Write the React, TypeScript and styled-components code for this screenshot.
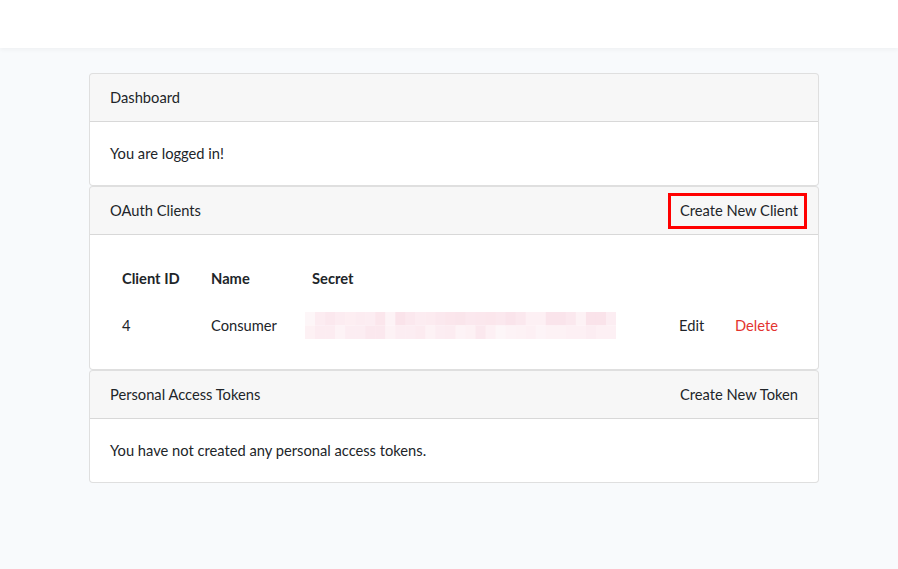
import React from "react";
import styled, { createGlobalStyle } from "styled-components";

const Global = createGlobalStyle`
  html, body { margin: 0; padding: 0; }
  body {
    background: #f8fafc;
    font-family: Lato, "Noto Sans", sans-serif;
    font-size: 14.7px;
    line-height: 23px;
    color: #212529;
  }
  * { box-sizing: border-box; }
`;

const Page = styled.div`
  min-height: 569px;
  display: flex;
  flex-direction: column;
`;

const Navbar = styled.nav`
  height: 48px;
  background: #fff;
  box-shadow: 0 2px 4px rgba(0, 0, 0, 0.04);
`;

const Main = styled.main`
  padding: 25px 0 24px 89px;
`;

const Column = styled.div`
  width: 730px;
  display: flex;
  flex-direction: column;
`;

const Card = styled.section`
  background: #fff;
  border: 1px solid rgba(0, 0, 0, 0.125);
  border-radius: 4px;
  overflow: hidden;
`;

const CardHeader = styled.header`
  height: 48px;
  padding: 0 20px;
  background: rgba(0, 0, 0, 0.03);
  border-bottom: 1px solid rgba(0, 0, 0, 0.125);
  display: flex;
  align-items: center;
  justify-content: space-between;
`;

const CardBody = styled.div`
  padding: 20px;
`;

const HeaderLink = styled.a<{ $marked?: boolean }>`
  position: relative;
  color: #212529;
  text-decoration: none;
  cursor: pointer;
  &::after {
    content: "";
    display: ${(p) => (p.$marked ? "block" : "none")};
    position: absolute;
    left: -12px;
    right: -9px;
    top: -6px;
    bottom: -7px;
    border: 3px solid #ff0000;
  }
`;

const Table = styled.table`
  width: 100%;
  table-layout: fixed;
  border-collapse: collapse;
`;

const Th = styled.th`
  text-align: left;
  font-weight: 700;
  padding: 12px;
  height: 47px;
`;

const Td = styled.td`
  padding: 12px;
  height: 47px;
  vertical-align: middle;
`;

const SecretCell = styled.td`
  padding: 0 0 0 5px;
  vertical-align: middle;
`;

const Action = styled.a<{ $danger?: boolean }>`
  color: ${(p) => (p.$danger ? "#e3342f" : "#212529")};
  text-decoration: none;
  cursor: pointer;
`;

const shades = [
  "#fdf6f8", "#fcecf1", "#fbe8ee", "#fcecf1", "#fdeef2", "#fcecf1", "#fcedf2", "#fbe6ec",
  "#fdf3f6", "#fae3ea", "#fbe8ee", "#fcecf1", "#fcebf0", "#fbe8ee", "#fbe6ec", "#fae5eb",
  "#fbe8ee", "#fbe7ed", "#fbe6ec", "#fbe8ee", "#fae4eb", "#fbe8ee", "#fdf0f4", "#fdf0f4",
  "#fae4eb", "#fae4eb", "#fbe8ee", "#fdf2f5", "#fae3ea", "#fae3ea", "#fcedf2", "#fcedf2",
];
const shades2 = [
  "#fdf1f4", "#fcecf1", "#fcecf1", "#fdf3f6", "#fcedf2", "#fcedf2", "#fbe8ee", "#fbe8ee",
  "#fdf2f5", "#fcedf2", "#fcedf2", "#fcebf0", "#fdf2f5", "#fcedf2", "#fcecf1", "#fdf3f6",
  "#fdf1f4", "#fbe8ee", "#fdf0f4", "#fdf6f8", "#fdf3f6", "#fdf2f5", "#fdf0f4", "#fdf4f7",
  "#fdf2f5", "#fdf2f5", "#fdf0f4", "#fdf0f4", "#fcedf2", "#fdf0f4", "#fdf0f4", "#fdf0f4",
];

function BlurredSecret() {
  const cols = 31;
  const w = 311;
  const cw = w / cols;
  return (
    <svg width={w} height={27} viewBox={`0 0 ${w} 27`} style={{ display: "block" }}>
      {Array.from({ length: cols }).map((_, i) => (
        <React.Fragment key={i}>
          <rect x={i * cw} y={0} width={cw + 0.5} height={13.5} fill={shades[i]} />
          <rect x={i * cw} y={13.5} width={cw + 0.5} height={13.5} fill={shades2[i]} />
        </React.Fragment>
      ))}
    </svg>
  );
}

export default function App() {
  return (
    <Page>
      <Global />
      <Navbar />
      <Main>
        <Column>
          <Card>
            <CardHeader>Dashboard</CardHeader>
            <CardBody>You are logged in!</CardBody>
          </Card>
          <Card>
            <CardHeader>
              <span>OAuth Clients</span>
              <HeaderLink $marked>Create New Client</HeaderLink>
            </CardHeader>
            <CardBody>
              <Table>
                <colgroup>
                  <col style={{ width: 89 }} />
                  <col style={{ width: 101 }} />
                  <col style={{ width: 367 }} />
                  <col style={{ width: 56 }} />
                  <col style={{ width: 75 }} />
                </colgroup>
                <thead>
                  <tr>
                    <Th>Client ID</Th>
                    <Th>Name</Th>
                    <Th>Secret</Th>
                    <Th />
                    <Th />
                  </tr>
                </thead>
                <tbody>
                  <tr>
                    <Td>4</Td>
                    <Td>Consumer</Td>
                    <SecretCell>
                      <BlurredSecret />
                    </SecretCell>
                    <Td>
                      <Action>Edit</Action>
                    </Td>
                    <Td>
                      <Action $danger>Delete</Action>
                    </Td>
                  </tr>
                </tbody>
              </Table>
            </CardBody>
          </Card>
          <Card>
            <CardHeader>
              <span>Personal Access Tokens</span>
              <HeaderLink>Create New Token</HeaderLink>
            </CardHeader>
            <CardBody>You have not created any personal access tokens.</CardBody>
          </Card>
        </Column>
      </Main>
    </Page>
  );
}
